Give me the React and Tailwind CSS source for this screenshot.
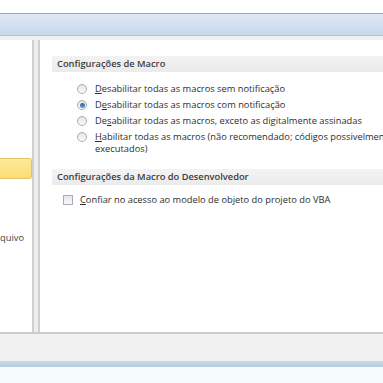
import React from "react";

const font = { fontFamily: '"Open Sans", "Noto Sans", sans-serif' };

function Radio({ checked }) {
  return (
    <span className="inline-flex w-[10px] h-[10px] rounded-full border border-[#a9adb3] bg-gradient-to-b from-[#e3e5e8] to-[#fbfbfb] items-center justify-center shrink-0">
      {checked && <span className="w-[5px] h-[5px] rounded-full bg-gradient-to-b from-[#2f5f93] to-[#6a9fd2]" />}
    </span>
  );
}

function Row({ checked, pre, u, post }) {
  return (
    <div className="flex items-center gap-[8px] h-[16px] shrink-0 whitespace-nowrap">
      <Radio checked={checked} />
      <span>
        {pre}<span className="underline underline-offset-[1px]">{u}</span>{post}
      </span>
    </div>
  );
}

export default function App() {
  return (
    <div className="w-[383px] h-[383px] flex flex-col overflow-hidden bg-white text-[9.3px] text-[#2e2e2e]" style={font}>
      <div className="h-[13px] bg-white shrink-0" />
      <div className="h-[1px] bg-[#9aa6b4] shrink-0" />
      <div className="h-[21px] bg-gradient-to-b from-[#dfe9f5] to-[#c6d8ec] shrink-0" />
      <div className="h-[1px] bg-[#b3c1d0] shrink-0" />
      <div className="h-[4px] bg-[#f1f1f1] shrink-0" />
      <div className="flex flex-1 min-h-0 bg-[#eeeeee]">
        <div className="w-[34px] bg-white border-r-2 border-[#cfcfcf] shrink-0 overflow-hidden">
          <div className="h-[118px]" />
          <div className="h-[21px] w-[32px] rounded-r-[3px] border border-l-0 border-[#e2c46a] bg-gradient-to-b from-[#feea9c] to-[#fcdc74]" />
          <div className="h-[53px]" />
          <div className="whitespace-nowrap text-[#444] leading-[12px]">quivo</div>
        </div>
        <div className="w-[4px] bg-[#eeeeee] shrink-0" />
        <div className="flex-1 min-w-0 bg-white border-l-2 border-[#cfcfcf] overflow-hidden">
          <div className="h-[16px]" />
          <div className="ml-[12px] h-[16px] bg-gradient-to-b from-[#f3f3f3] to-[#ebebeb] flex items-center pl-[5px] font-semibold text-[#3c3c3c] whitespace-nowrap">
            Configurações de Macro
          </div>
          <div className="ml-[37px] mt-[9px]">
            <Row pre="" u="D" post="esabilitar todas as macros sem notificação" />
            <Row checked pre="D" u="e" post="sabilitar todas as macros com notificação" />
            <Row pre="De" u="s" post="abilitar todas as macros, exceto as digitalmente assinadas" />
            <Row pre="" u="H" post="abilitar todas as macros (não recomendado; códigos possivelmente perigosos podem ser" />
            <div className="ml-[18px] h-[11px] leading-[11px] -mt-[2px] whitespace-nowrap">executados)</div>
          </div>
          <div className="h-[15px]" />
          <div className="ml-[12px] h-[16px] bg-gradient-to-b from-[#f3f3f3] to-[#ebebeb] flex items-center pl-[5px] font-semibold text-[#3c3c3c] whitespace-nowrap">
            Configurações da Macro do Desenvolvedor
          </div>
          <div className="ml-[23px] mt-[9px] h-[12px] flex items-center gap-[7px] whitespace-nowrap">
            <span className="w-[10px] h-[10px] border border-[#a9adb3] bg-gradient-to-b from-[#e4e6e9] to-[#fafafa] shrink-0" />
            <span><span className="underline underline-offset-[1px]">C</span>onfiar no acesso ao modelo de objeto do projeto do VBA</span>
          </div>
        </div>
      </div>
      <div className="h-[2px] bg-[#cccccc] shrink-0" />
      <div className="h-[27px] bg-[#f0f0f0] shrink-0" />
      <div className="h-[6px] bg-gradient-to-b from-[#c9dcea] to-[#b3cde0] shrink-0" />
      <div className="h-[16px] bg-[#f6fbfd] shrink-0" />
    </div>
  );
}
